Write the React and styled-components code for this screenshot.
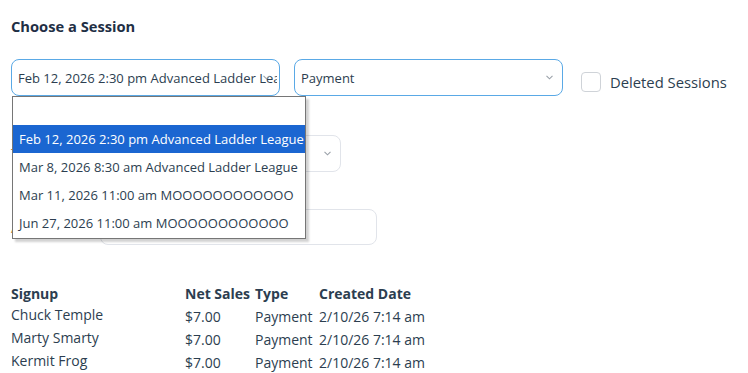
import React from "react";
import styled, { createGlobalStyle } from "styled-components";

const Global = createGlobalStyle`
  html, body { margin: 0; padding: 0; background: #fff; }
  body { font-family: "Open Sans", "Noto Sans", sans-serif; color: #2c3e50; }
`;

const Page = styled.div`
  padding: 16px 0 0 11px;
  width: 748px;
  height: 373px;
  box-sizing: border-box;
  overflow: hidden;
`;

const Heading = styled.h2`
  margin: 0;
  font-size: 14.7px;
  line-height: 20px;
  font-weight: 700;
  color: #1f2f45;
`;

const ControlRow = styled.div`
  display: flex;
  align-items: flex-start;
  margin-top: 23px;
  gap: 14px;
`;

const SelectWrap = styled.div`
  position: relative;
`;

const SelectBox = styled.div`
  position: relative;
  box-sizing: border-box;
  width: ${(p) => p.$w}px;
  height: 37px;
  border: 1px solid ${(p) => (p.$focused ? "#5aa9e6" : "#e1e4ea")};
  border-radius: 8px;
  padding: 0 ${(p) => (p.$overlap ? 2 : 20)}px 0 6px;
  display: flex;
  align-items: center;
  font-size: 13px;
  color: #2c3e50;
  white-space: nowrap;
  overflow: hidden;
  background: #fff;
`;

const SelectText = styled.span`
  overflow: hidden;
  flex: 1;
  min-width: 0;
`;

const Chevron = styled.svg`
  position: absolute;
  right: 9px;
  top: 50%;
  margin-top: -3px;
  width: 7px;
  height: 5px;
`;

const Check = styled.label`
  display: flex;
  align-items: center;
  gap: 9px;
  margin-left: 4px;
  margin-top: 13px;
  font-size: 14.8px;
  color: #2c3e50;
`;

const CheckBoxSq = styled.span`
  width: 20px;
  height: 20px;
  box-sizing: border-box;
  border: 1px solid #cfd3d8;
  border-radius: 4px;
`;

const Popup = styled.div`
  position: absolute;
  top: 100%;
  left: 1px;
  width: 294px;
  box-sizing: border-box;
  border: 1px solid #767676;
  background: #fff;
  box-shadow: 3px 3px 2px rgba(0, 0, 0, 0.18);
  z-index: 10;
  padding-bottom: 1px;
`;

const Option = styled.div`
  height: 28px;
  line-height: 28px;
  padding-left: 6px;
  font-size: 13px;
  white-space: nowrap;
  overflow: hidden;
  background: ${(p) => (p.$active ? "#1b66d1" : "#fff")};
  color: ${(p) => (p.$active ? "#fff" : "#2c3e50")};
`;

const FormRow = styled.div`
  display: flex;
  align-items: center;
  margin-top: ${(p) => p.$mt}px;
`;

const FieldLabel = styled.span`
  width: 89px;
  font-size: 14px;
  color: #c77b3a;
`;

const TextInput = styled.div`
  box-sizing: border-box;
  width: ${(p) => p.$w}px;
  height: 36px;
  border: 1px solid #e1e4ea;
  border-radius: 8px;
`;

const Table = styled.div`
  margin-top: 39px;
  display: grid;
  grid-template-columns: 174px 70px 64px auto;
  grid-template-rows: 21px;
  grid-auto-rows: 23px;
  font-size: 14px;
  color: #2c3e50;
`;

const Th = styled.div`
  font-weight: 700;
  line-height: 20px;
  white-space: nowrap;
`;

const Td = styled.div`
  line-height: 20px;
  white-space: nowrap;
  padding-top: ${(p) => (p.$name ? 0 : 2)}px;
`;

const ChevronIcon = () => (
  <Chevron viewBox="0 0 7 5">
    <path d="M0.5 0.8 L3.5 3.8 L6.5 0.8" fill="none" stroke="#9aa1a9" strokeWidth="1.1" />
  </Chevron>
);

const options = [
  "",
  "Feb 12, 2026 2:30 pm Advanced Ladder League",
  "Mar 8, 2026 8:30 am Advanced Ladder League",
  "Mar 11, 2026 11:00 am MOOOOOOOOOOOO",
  "Jun 27, 2026 11:00 am MOOOOOOOOOOOO",
];

const rows = [
  ["Chuck Temple", "$7.00", "Payment", "2/10/26 7:14 am"],
  ["Marty Smarty", "$7.00", "Payment", "2/10/26 7:14 am"],
  ["Kermit Frog", "$7.00", "Payment", "2/10/26 7:14 am"],
];

export default function App() {
  return (
    <>
      <Global />
      <Page>
        <Heading>Choose a Session</Heading>
        <ControlRow>
          <SelectWrap>
            <SelectBox $w={269} $focused $overlap>
              <SelectText>Feb 12, 2026 2:30 pm Advanced Ladder League</SelectText>
              <ChevronIcon />
            </SelectBox>
            <Popup>
              {options.map((o, i) => (
                <Option key={i} $active={i === 1}>
                  {o}
                </Option>
              ))}
            </Popup>
          </SelectWrap>
          <SelectWrap>
            <SelectBox $w={269} $focused>
              <SelectText>Payment</SelectText>
              <ChevronIcon />
            </SelectBox>
          </SelectWrap>
          <Check>
            <CheckBoxSq />
            Deleted Sessions
          </Check>
        </ControlRow>
        <FormRow $mt={39}>
          <FieldLabel>Type</FieldLabel>
          <SelectBox $w={241}>
            <SelectText>Payment</SelectText>
            <ChevronIcon />
          </SelectBox>
        </FormRow>
        <FormRow $mt={37}>
          <FieldLabel>Amount</FieldLabel>
          <TextInput $w={277} />
        </FormRow>
        <Table>
          <Th>Signup</Th>
          <Th>Net Sales</Th>
          <Th>Type</Th>
          <Th>Created Date</Th>
          {rows.map((r, i) => (
            <React.Fragment key={i}>
              <Td $name>{r[0]}</Td>
              <Td>{r[1]}</Td>
              <Td>{r[2]}</Td>
              <Td>{r[3]}</Td>
            </React.Fragment>
          ))}
        </Table>
      </Page>
    </>
  );
}
